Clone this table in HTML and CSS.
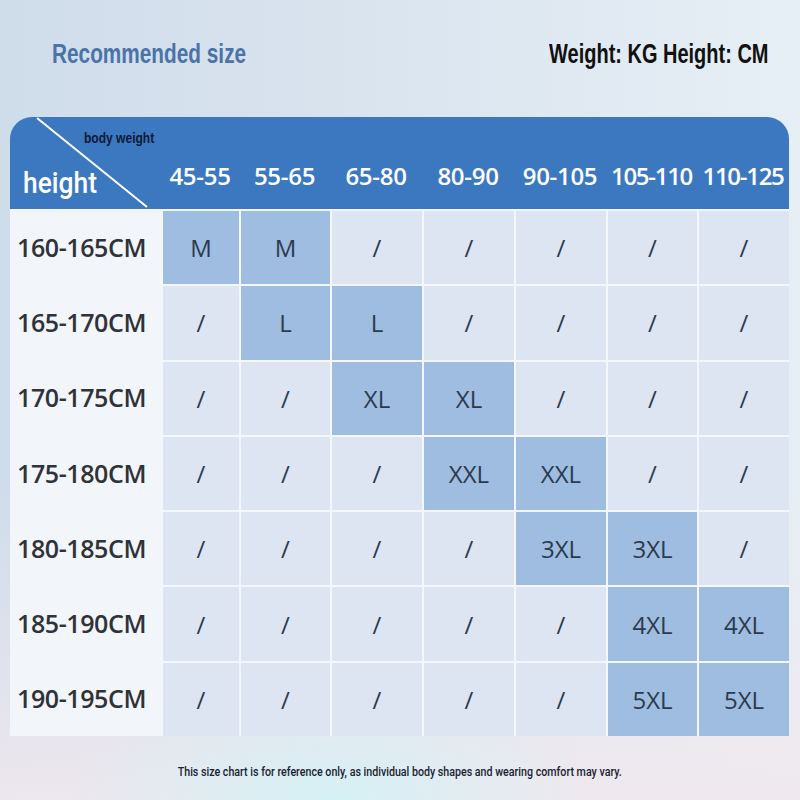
FILE: index.html
```html
<!DOCTYPE html>
<html>
<head>
<meta charset="utf-8">
<link rel="stylesheet" href="styles.css">
</head>
<body>
<div class="page">
  <div class="top">
    <div class="title">Recommended size</div>
    <div class="units">Weight: KG Height: CM</div>
  </div>
  <div class="chart">
    <div class="corner">
      <svg class="diag" width="151" height="92" viewBox="0 0 151 92"><line x1="27" y1="1" x2="137" y2="90" stroke="#ffffff" stroke-width="2"/></svg>
      <span class="bw">body weight</span>
      <span class="ht">height</span>
    </div>
    <div class="hd">45-55</div>
    <div class="hd">55-65</div>
    <div class="hd">65-80</div>
    <div class="hd">80-90</div>
    <div class="hd">90-105</div>
    <div class="hd tight">105-110</div>
    <div class="hd tight">110-125</div>

    <div class="lbl">160-165CM</div>
    <div class="c on">M</div><div class="c on">M</div><div class="c">/</div><div class="c">/</div><div class="c">/</div><div class="c">/</div><div class="c">/</div>

    <div class="lbl">165-170CM</div>
    <div class="c">/</div><div class="c on">L</div><div class="c on">L</div><div class="c">/</div><div class="c">/</div><div class="c">/</div><div class="c">/</div>

    <div class="lbl">170-175CM</div>
    <div class="c">/</div><div class="c">/</div><div class="c on">XL</div><div class="c on">XL</div><div class="c">/</div><div class="c">/</div><div class="c">/</div>

    <div class="lbl">175-180CM</div>
    <div class="c">/</div><div class="c">/</div><div class="c">/</div><div class="c on">XXL</div><div class="c on">XXL</div><div class="c">/</div><div class="c">/</div>

    <div class="lbl">180-185CM</div>
    <div class="c">/</div><div class="c">/</div><div class="c">/</div><div class="c">/</div><div class="c on">3XL</div><div class="c on">3XL</div><div class="c">/</div>

    <div class="lbl">185-190CM</div>
    <div class="c">/</div><div class="c">/</div><div class="c">/</div><div class="c">/</div><div class="c">/</div><div class="c on">4XL</div><div class="c on">4XL</div>

    <div class="lbl">190-195CM</div>
    <div class="c">/</div><div class="c">/</div><div class="c">/</div><div class="c">/</div><div class="c">/</div><div class="c on">5XL</div><div class="c on">5XL</div>
  </div>
  <div class="note"><span class="note-text">This size chart is for reference only, as individual body shapes and wearing comfort may vary.</span></div>
</div>
</body>
</html>
```
FILE: styles.css
```css
html, body {
  margin: 0;
  padding: 0;
}
body {
  width: 800px;
  height: 800px;
  overflow: hidden;
  background:
    radial-gradient(ellipse 260px 120px at 330px 800px, rgba(210, 242, 246, 0.9), rgba(210, 242, 246, 0) 100%),
    linear-gradient(180deg, rgba(240,232,238,0) 60%, rgba(240,232,238,0.9) 100%),
    linear-gradient(90deg, #cfdcea 0%, #dae4ef 45%, #e6eff5 100%);
  font-family: "Open Sans", sans-serif;
}
.page {
  display: flex;
  flex-direction: column;
  padding: 0 10px 0 10px;
}
.top {
  display: flex;
  justify-content: space-between;
  align-items: center;
  height: 112px;
  padding: 0 22px 3px 42px;
  box-sizing: border-box;
}
.title {
  font-family: "Liberation Sans", sans-serif;
  font-weight: 700;
  font-size: 27px;
  color: #4a73a9;
  transform: scaleX(0.77);
  transform-origin: left center;
  white-space: nowrap;
}
.units {
  font-family: "Liberation Sans", sans-serif;
  font-weight: 700;
  font-size: 27px;
  color: #111111;
  transform: scaleX(0.74);
  transform-origin: right center;
  white-space: nowrap;
}
.chart {
  margin-top: 5px;
  width: 779px;
  display: grid;
  grid-template-columns: 151px 78px 91px 92px 92px 92px 91px 92px;
  grid-template-rows: 92px repeat(7, 75.3px);
}
.corner {
  position: relative;
  background: #3b78c0;
  border-top-left-radius: 22px;
  overflow: hidden;
}
.diag {
  position: absolute;
  left: 0;
  top: 0;
}
.bw {
  position: absolute;
  left: 74px;
  top: 13px;
  font-family: "Liberation Sans", sans-serif;
  font-weight: 700;
  font-size: 14px;
  color: #0c1a36;
  white-space: nowrap;
  transform: scaleX(0.86);
  transform-origin: left center;
}
.ht {
  position: absolute;
  left: 13px;
  top: 48px;
  font-family: "Roboto", sans-serif;
  font-weight: 500;
  font-size: 30px;
  color: #ffffff;
  white-space: nowrap;
  transform: scaleX(0.88);
  transform-origin: left center;
}
.hd {
  background: #3b78c0;
  color: #ffffff;
  font-weight: 600;
  font-size: 24px;
  display: flex;
  align-items: center;
  justify-content: center;
  padding-top: 24px;
  box-sizing: border-box;
  letter-spacing: -0.3px;
}
.hd.tight {
  letter-spacing: -1.3px;
}
.hd:nth-child(8) {
  border-top-right-radius: 22px;
}
.lbl {
  background: #f2f5fa;
  color: #2f3237;
  font-weight: 600;
  font-size: 25px;
  display: flex;
  align-items: center;
  padding-left: 7px;
  letter-spacing: -0.4px;
}
.c {
  background: #dce5f1;
  color: #2c3a4e;
  font-size: 24px;
  display: flex;
  align-items: center;
  justify-content: center;
  border-left: 2px solid #f4f7fb;
  border-top: 2px solid #f4f7fb;
  box-sizing: border-box;
}
.c.on {
  background: #9ebde0;
}
.note {
  margin-top: 28px;
  display: flex;
  justify-content: center;
}
.note-text {
  font-family: "Roboto", sans-serif;
  font-weight: 500;
  font-size: 13px;
  color: #1b2230;
  white-space: nowrap;
  transform: scaleX(0.82);
}
```
